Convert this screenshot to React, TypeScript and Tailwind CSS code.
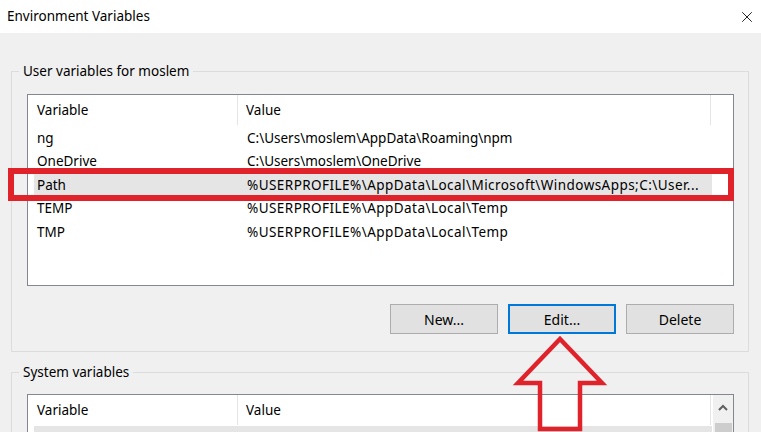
import { X } from "lucide-react";

const userVars = [
  { name: "ng", value: "C:\\Users\\moslem\\AppData\\Roaming\\npm" },
  { name: "OneDrive", value: "C:\\Users\\moslem\\OneDrive" },
  { name: "Path", value: "%USERPROFILE%\\AppData\\Local\\Microsoft\\WindowsApps;C:\\User...", selected: true },
  { name: "TEMP", value: "%USERPROFILE%\\AppData\\Local\\Temp" },
  { name: "TMP", value: "%USERPROFILE%\\AppData\\Local\\Temp" },
];

function Header() {
  return (
    <div className="flex h-[30px] items-center">
      <div className="flex h-full w-[210px] items-center border-r border-[#e5e5e5] pl-[9px]">Variable</div>
      <div className="flex h-full w-[473px] items-center border-r border-[#e5e5e5] pl-[8px]">Value</div>
    </div>
  );
}

function Btn({ label, focused }: { label: string; focused?: boolean }) {
  return (
    <button
      className={
        "h-[30px] w-[108px] bg-[#e1e1e1] text-[14px] " +
        (focused ? "border-2 border-[#0078d7]" : "border border-[#adadad]")
      }
    >
      {label}
    </button>
  );
}

export default function App() {
  return (
    <div className="relative h-[432px] w-[761px] overflow-hidden bg-[#f0f0f0] text-[13.5px] text-black [font-family:'Noto_Sans',sans-serif]">
      {/* Title bar */}
      <div className="flex h-[33px] items-center justify-between bg-white pl-[7px] pr-[5px]">
        <span className="text-[13.5px]">Environment Variables</span>
        <X size={18} strokeWidth={1.3} className="text-[#222]" />
      </div>

      <div className="px-[11px] pt-[38px]">
        {/* User variables */}
        <div className="relative w-[738px] border border-[#dcdcdc] pb-[17px] pl-[15px] pr-[14px] pt-[22px]">
          <span className="absolute -top-[11px] left-[7px] bg-[#f0f0f0] px-[4px]">User variables for moslem</span>
          <div className="h-[192px] border border-[#828790] bg-white">
            <Header />
            <div className="pl-[6px] pt-[1px]">
              {userVars.map((v) => (
                <div
                  key={v.name}
                  className={"flex h-[23.5px] w-[678px] items-center " + (v.selected ? "bg-[#e5e5e5]" : "")}
                >
                  <div className="w-[213px] pl-[3px]">{v.name}</div>
                  <div className={"whitespace-nowrap " + (v.value.startsWith("%") ? "tracking-[0.45px]" : "")}>
                    {v.value}
                  </div>
                </div>
              ))}
            </div>
          </div>
          <div className="mt-[18px] flex justify-end gap-[10px]">
            <Btn label="New..." />
            <Btn label="Edit..." focused />
            <Btn label="Delete" />
          </div>
        </div>

        {/* System variables */}
        <div className="relative mt-[20px] h-[120px] w-[738px] border border-[#dcdcdc] pl-[15px] pr-[14px] pt-[21px]">
          <span className="absolute -top-[11px] left-[7px] bg-[#f0f0f0] px-[4px]">System variables</span>
          <div className="flex h-[200px] border border-[#828790] bg-white">
            <div className="flex-1">
              <Header />
              <div className="pl-[6px] pt-[1px]">
                <div className="h-[23px] w-[678px] bg-[#e5e5e5]" />
              </div>
            </div>
            <div className="flex w-[20px] flex-col items-center bg-[#f0f0f0]">
              <svg width="10" height="22" viewBox="0 0 10 22" className="mt-[6px]">
                <path d="M1 9 L5 5 L9 9" fill="none" stroke="#606060" strokeWidth="2" />
              </svg>
              <div className="h-[60px] w-[17px] bg-[#cdcdcd]" />
            </div>
          </div>
        </div>
      </div>

      {/* Annotations */}
      <div className="absolute left-[8px] top-[168px] h-[33px] w-[726px] border-[6px] border-[#e0232b]" />
      <svg className="absolute left-[510px] top-[334px]" width="100" height="98" viewBox="0 0 100 98">
        <path
          d="M50 5 L92 49 L70 49 L70 95 L30 95 L30 49 L8 49 Z"
          fill="none"
          stroke="#e0232b"
          strokeWidth="4.5"
          strokeLinejoin="miter"
        />
      </svg>
    </div>
  );
}
